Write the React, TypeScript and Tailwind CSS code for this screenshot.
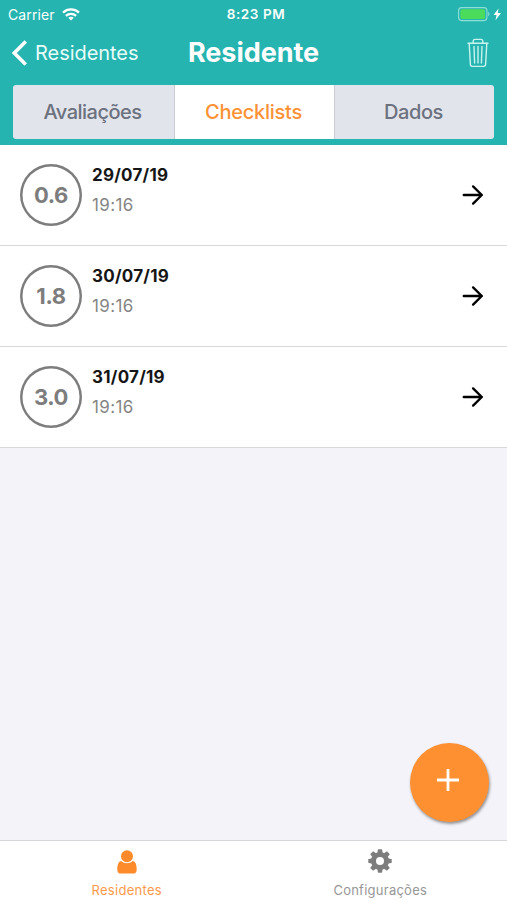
type Checklist = {
  score: string
  date: string
  time: string
}

const checklists: Checklist[] = [
  { score: '0.6', date: '29/07/19', time: '19:16' },
  { score: '1.8', date: '30/07/19', time: '19:16' },
  { score: '3.0', date: '31/07/19', time: '19:16' }
]

const gearTeeth = [0, 45, 90, 135, 180, 225, 270, 315]

function WifiIcon() {
  return (
    <svg width="18" height="13" viewBox="0 0 18 13" fill="none" stroke="white" strokeWidth="2.3">
      <path d="M1 4.6C5.5 0.4 12.5 0.4 17 4.6" />
      <path d="M3.9 7.8C6.8 5.1 11.2 5.1 14.1 7.8" />
      <path d="M6.3 9.8C7.8 8.4 10.2 8.4 11.7 9.8L9 12.5Z" fill="white" stroke="none" />
    </svg>
  )
}

function BatteryIcon() {
  return (
    <svg width="44" height="15" viewBox="0 0 44 15" fill="none">
      <rect x="0.6" y="0.6" width="28.3" height="13" rx="3" stroke="#8fe0d4" strokeWidth="1.1" />
      <rect x="2.4" y="2.3" width="24.6" height="9.6" rx="1.4" fill="#4cdc5c" />
      <path d="M30.2 5C32 5.6 32 8.6 30.2 9.2Z" fill="#8fe0d4" />
      <path d="M40.6 1.4L35.5 8H38.5L37.5 13.2L43 6H39.8Z" fill="white" />
    </svg>
  )
}

function TrashIcon() {
  return (
    <svg
      width="22"
      height="30"
      viewBox="0 0 22 30"
      fill="none"
      stroke="#c9f3ef"
      strokeWidth="1.4"
      strokeLinecap="round"
      strokeLinejoin="round"
    >
      <path d="M1 5.2H21" />
      <path d="M6.2 5V3.2Q6.2 1.4 8 1.4H14Q15.8 1.4 15.8 3.2V5" />
      <path d="M2.2 5.4L3.4 26.6Q3.5 28.4 5.3 28.4H16.7Q18.5 28.4 18.6 26.6L19.8 5.4" />
      <path d="M7 8.5L7.6 25M11 8.5V25M15 8.5L14.4 25" />
    </svg>
  )
}

function ArrowIcon() {
  return (
    <svg
      width="22"
      height="22"
      viewBox="0 0 22 22"
      fill="none"
      stroke="black"
      strokeWidth="2.4"
      strokeLinecap="round"
      strokeLinejoin="round"
    >
      <path d="M1.8 11H19.8M11.1 2.4L19.8 11L11.1 19.6" />
    </svg>
  )
}

function PersonIcon() {
  return (
    <svg width="20" height="25" viewBox="0 0 20 25" fill="#fd8b2c">
      <path d="M4.3 11C1.3 11.4 0.3 15 0.3 19.7C0.3 22.5 1.8 23.6 3.9 23.6H16.1C18.2 23.6 19.7 22.5 19.7 19.7C19.7 15 18.7 11.4 15.7 11C12.6 14 7.4 14 4.3 11Z" />
      <circle cx="10" cy="6.2" r="6" />
    </svg>
  )
}

function GearIcon() {
  return (
    <svg width="24" height="24" viewBox="0 0 24 24">
      <g fill="#7d7d7d">
        {gearTeeth.map((angle) => (
          <path
            key={angle}
            d="M9.2 5L9.9 0.7Q10 0.3 10.4 0.3H13.6Q14 0.3 14.1 0.7L14.8 5Z"
            transform={`rotate(${angle} 12 12)`}
          />
        ))}
      </g>
      <circle cx="12" cy="12" r="6.5" fill="none" stroke="#7d7d7d" strokeWidth="5" />
    </svg>
  )
}

function Header() {
  return (
    <header className="h-[145px] shrink-0 bg-[#25b4b0] text-white">
      <div className="grid h-7 grid-cols-[1fr_auto_1fr] items-center pl-2 pr-[3px]">
        <div className="flex items-center gap-[7px]">
          <span className="text-[14px] tracking-[0.1px]">Carrier</span>
          <WifiIcon />
        </div>
        <span className="text-[13.5px] font-semibold tracking-[0.55px]">8:23 PM</span>
        <div className="flex justify-end pr-0.5">
          <BatteryIcon />
        </div>
      </div>

      <div className="grid h-[50px] grid-cols-[1fr_auto_1fr] items-center pl-[11px] pr-[11px]">
        <button className="flex items-center gap-2 text-[20px] tracking-[-0.05px] text-[#e8fcfa]">
          <svg width="16" height="26" viewBox="0 0 16 26" fill="none" stroke="white" strokeWidth="3.6">
            <path d="M14.8 1.5L3.3 13L14.8 24.5" />
          </svg>
          Residentes
        </button>
        <h1 className="text-[27px] font-bold tracking-[-0.05px]">Residente</h1>
        <button className="flex justify-end pr-[7px]" aria-label="Excluir">
          <TrashIcon />
        </button>
      </div>

      <div className="mx-[13px] mt-[7px] grid h-[54px] grid-cols-[162px_159px_1fr] overflow-hidden rounded-[3px] bg-[#e2e4eb] text-[20px] font-medium text-[#6b717e]">
        <button className="border-r border-[#c9ccd5] pr-0.5 tracking-[-0.5px]">Avaliações</button>
        <button className="bg-white pr-0.5 tracking-[-0.25px] text-[#fd9134]">Checklists</button>
        <button className="border-l border-[#c9ccd5] pr-0.5 tracking-[-0.4px]">Dados</button>
      </div>
    </header>
  )
}

function ChecklistRow({ score, date, time }: Checklist) {
  return (
    <li className="flex h-[101px] items-center border-b border-[#d9d9dc] bg-white pl-5 pr-[23px]">
      <div className="flex size-[62px] items-center justify-center rounded-full text-[22px] font-bold tracking-[-0.4px] text-[#7d7d7d] shadow-[inset_0_0_0_2.5px_#7d7d7d]">
        {score}
      </div>
      <div className="ml-2.5 flex-1 pb-[9px]">
        <p className="text-[17px] font-bold leading-[30px] tracking-[0.25px] text-[#161616]">{date}</p>
        <p className="text-[17px] leading-[31px] tracking-[0.4px] text-[#858585]">{time}</p>
      </div>
      <ArrowIcon />
    </li>
  )
}

export default function App() {
  return (
    <div className="relative flex h-[900px] w-[507px] flex-col overflow-hidden bg-[#f3f3f9] font-['Inter','Liberation_Sans',sans-serif]">
      <Header />

      <ul className="flex-1">
        {checklists.map((item) => (
          <ChecklistRow key={item.date} {...item} />
        ))}
      </ul>

      <button
        aria-label="Adicionar"
        className="absolute bottom-[78px] right-[18px] flex size-[79px] items-center justify-center rounded-full bg-[#fe9032] pb-[5px] pr-[3px] shadow-[1px_2px_3px_rgba(0,0,0,0.4)]"
      >
        <svg width="22" height="22" viewBox="0 0 22 22" stroke="white" strokeWidth="2.8">
          <path d="M11 0V22M0 11H22" />
        </svg>
      </button>

      <nav className="grid h-[60px] grid-cols-2 border-t border-[#d6d6dc] bg-white text-[13px]">
        <button className="flex flex-col items-center pt-[9px] text-[#fd9a4a]">
          <PersonIcon />
          <span className="mt-[6px] tracking-[0.3px]">Residentes</span>
        </button>
        <button className="flex flex-col items-center pt-2 text-[#979797]">
          <GearIcon />
          <span className="mt-2 tracking-[0.25px]">Configurações</span>
        </button>
      </nav>
    </div>
  )
}
